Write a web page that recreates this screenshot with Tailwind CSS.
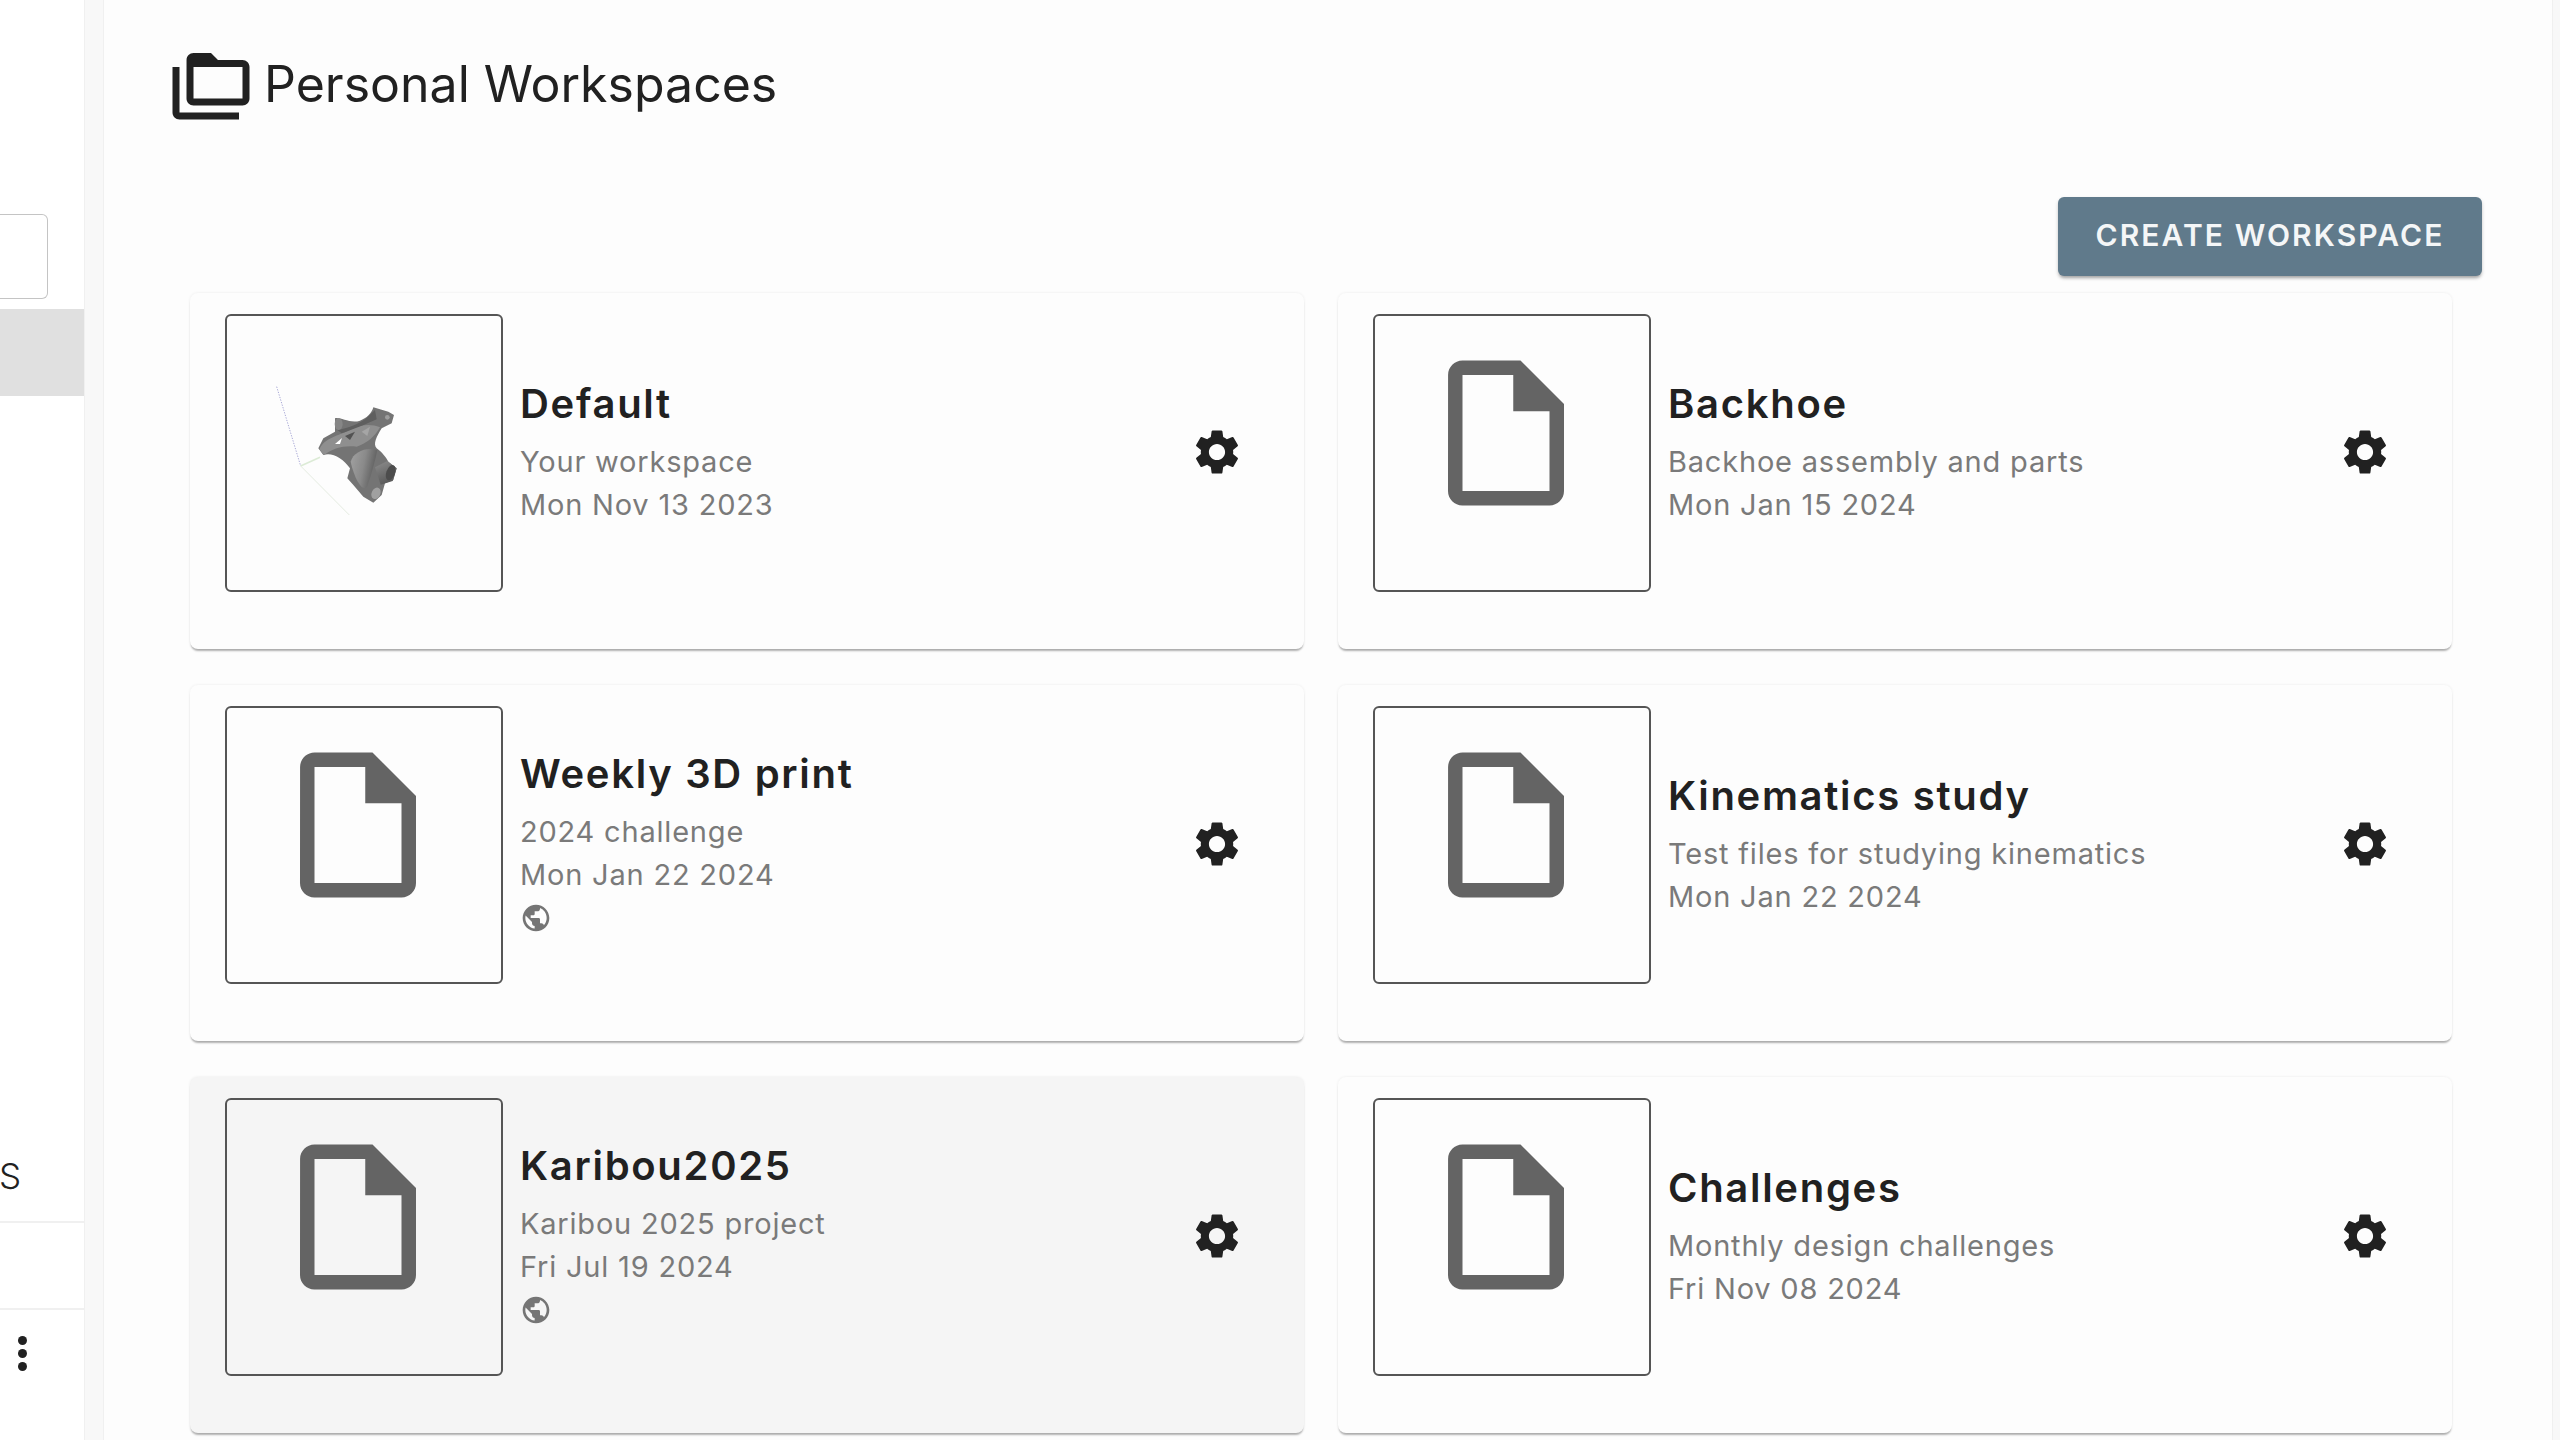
<!DOCTYPE html>
<html lang="en">
<head>
	<meta charset="UTF-8">
	<meta name="viewport" content="width=device-width, initial-scale=1.0">
	<title>Personal Workspaces</title>
	<script src="https://cdn.jsdelivr.net/npm/@tailwindcss/browser@4"></script>
</head>
<body class="bg-[#fdfdfd] font-['Inter',sans-serif] text-[#212121]">

<!-- shared icons -->
<svg class="hidden">
	<symbol id="icon-file" viewBox="0 0 24 24"><path d="M14 2H6c-1.1 0-1.99.9-1.99 2L4 20c0 1.1.89 2 1.99 2H18c1.1 0 2-.9 2-2V8l-6-6zM6 20V4h7v5h5v11H6z"/></symbol>
	<symbol id="icon-gear" viewBox="0 0 24 24"><path d="M19.14 12.94c.04-.3.06-.61.06-.94 0-.32-.02-.64-.07-.94l2.03-1.58c.18-.14.23-.41.12-.61l-1.92-3.32c-.12-.22-.37-.29-.59-.22l-2.39.96c-.5-.38-1.03-.7-1.62-.94l-.36-2.54c-.04-.24-.24-.41-.48-.41h-3.84c-.24 0-.43.17-.47.41l-.36 2.54c-.59.24-1.13.57-1.62.94l-2.39-.96c-.22-.08-.47 0-.59.22L2.74 8.87c-.12.21-.08.47.12.61l2.03 1.58c-.05.3-.09.63-.09.94s.02.64.07.94l-2.03 1.58c-.18.14-.23.41-.12.61l1.92 3.32c.12.22.37.29.59.22l2.39-.96c.5.38 1.03.7 1.62.94l.36 2.54c.05.24.24.41.48.41h3.84c.24 0 .44-.17.47-.41l.36-2.54c.59-.24 1.13-.56 1.62-.94l2.39.96c.22.08.47 0 .59-.22l1.92-3.32c.12-.22.07-.47-.12-.61l-2.01-1.58zM12 15.6c-1.98 0-3.6-1.62-3.6-3.6s1.62-3.6 3.6-3.6 3.6 1.62 3.6 3.6-1.62 3.6-3.6 3.6z"/></symbol>
	<symbol id="icon-globe" viewBox="0 0 24 24"><path d="M12 2C6.48 2 2 6.48 2 12s4.48 10 10 10 10-4.48 10-10S17.52 2 12 2zm-1 17.93c-3.95-.49-7-3.85-7-7.93 0-.62.08-1.21.21-1.79L9 15v1c0 1.1.9 2 2 2v1.93zm6.9-2.54c-.26-.81-1-1.39-1.9-1.39h-1v-3c0-.55-.45-1-1-1H8v-2h2c.55 0 1-.45 1-1V7h2c1.1 0 2-.9 2-2v-.41c2.93 1.19 5 4.06 5 7.41 0 2.08-.8 3.97-2.1 5.39z"/></symbol>
</svg>

<div class="flex w-[2560px] h-[1440px] overflow-hidden">

	<!-- Sidebar, scrolled mostly out of view -->
	<aside class="w-[84px] shrink-0 bg-white overflow-hidden flex flex-col">
		<div class="h-[85px] w-[48px] mt-[214px] border border-l-0 border-[#c4c4c4] rounded-r-[6px]"></div>
		<div class="h-[87px] mt-[10px] bg-[#e0e0e0]"></div>
		<div class="h-[827px] flex justify-start items-end pb-[25px] border-b-2 border-[#f0f0f0]">
			<span class="text-[35px] leading-[40px] font-light w-[21px] overflow-hidden flex justify-end">S</span>
		</div>
		<div class="h-[87px] border-b-2 border-[#f0f0f0]"></div>
		<div class="flex flex-col gap-[4px] ml-[18px] mt-[26px]">
			<span class="w-[9px] h-[9px] rounded-full bg-[#212121]"></span>
			<span class="w-[9px] h-[9px] rounded-full bg-[#212121]"></span>
			<span class="w-[9px] h-[9px] rounded-full bg-[#212121]"></span>
		</div>
	</aside>
	<div class="w-[20px] shrink-0 bg-[#f8f8f8] border-x border-[#f0f0f0]"></div>

	<!-- Main column -->
	<main class="w-[2448px] shrink-0">
		<header class="flex items-center h-[84px] mt-[46px] ml-[65px]">
			<svg class="w-[84px] h-[84px] fill-[#212121]" viewBox="0 0 24 24"><path fill-rule="evenodd" d="M3 19h17v2H3c-1.1 0-2-.9-2-2V6h2v13zM23 6v9c0 1.1-.9 2-2 2H7c-1.1 0-2-.9-2-2l.01-11c0-1.1.89-2 1.99-2h5l2 2h7c1.1 0 2 .9 2 2zM7 15h14V6H7v9z"/></svg>
			<h1 class="ml-[11px] -mt-[8px] text-[50px] leading-[60px] font-normal">Personal Workspaces</h1>
		</header>

		<div class="flex justify-end mt-[67px] mr-[70px]">
			<button class="w-[424px] h-[79px] pb-[2px] rounded-[6px] bg-[#607a8b] text-[#f4f6f7] text-[30px] font-semibold tracking-[2.1px] shadow-[0_3px_3px_-1px_rgba(0,0,0,0.25),0_2px_4px_0_rgba(0,0,0,0.14)]">CREATE WORKSPACE</button>
		</div>

		<section class="grid grid-cols-[1114px_1114px] gap-x-[34px] gap-y-[36px] mt-[17px] ml-[86px]">

			<!-- Default -->
			<article class="h-[356px] rounded-[8px] bg-[#fdfdfd] pl-[35px] pt-[21px] flex shadow-[0_3px_2px_-1px_rgba(0,0,0,0.3),0_0_3px_0_rgba(0,0,0,0.08)]">
				<div class="w-[278px] h-[278px] shrink-0 rounded-[6px] border-2 border-[#555] overflow-hidden">
					<!-- part render -->
					<svg class="w-[160px] h-[160px] ml-[33px] mt-[64px] blur-[0.6px]" viewBox="0 0 480 480">
						<defs>
							<linearGradient id="bodyShade" x1="0" y1="0" x2="1" y2="0.3"><stop offset="0" stop-color="#a2a2a2"/><stop offset="0.55" stop-color="#8a8a8a"/><stop offset="1" stop-color="#5e5e5e"/></linearGradient>
							<linearGradient id="shaftShade" x1="0" y1="0" x2="0.4" y2="1"><stop offset="0" stop-color="#8e8e8e"/><stop offset="1" stop-color="#5a5a5a"/></linearGradient>
						</defs>
						<path d="M50 20 L122 258" stroke="#a9a9d6" stroke-width="3" stroke-dasharray="4 4" fill="none"/>
						<path d="M122 258 L180 232" stroke="#dcebd6" stroke-width="5" fill="none"/>
						<path d="M122 258 L268 405" stroke="#e4ebe0" stroke-width="3" fill="none"/>
						<!-- silhouette -->
						<path fill="#747474" d="M225 115 C240 110 270 132 300 122 C320 115 335 100 340 82 L385 95 L402 105 L395 130 L365 145 C350 170 338 192 350 205 C365 215 380 235 385 245 L410 265 L400 300 L375 310 L365 345 L340 368 L310 350 L280 315 L262 295 L270 265 C250 235 215 215 190 225 L175 205 L190 175 L225 155 Z"/>
						<!-- arch band -->
						<path fill="#8f8f8f" d="M178 208 C195 172 235 168 270 150 C300 135 330 130 360 142 C345 170 320 190 290 200 C255 195 215 205 192 226 Z"/>
						<path fill="#5f5f5f" d="M232 150 C262 145 300 132 322 112 L345 90 L350 118 C320 132 280 148 245 160 Z"/>
						<!-- hub and shaft -->
						<path fill="url(#bodyShade)" d="M272 245 C280 215 320 200 352 210 C345 245 335 280 322 318 C312 340 285 305 272 245 Z"/>
						<path fill="url(#shaftShade)" d="M345 262 L382 243 L410 265 L398 303 L362 314 Z"/>
						<ellipse cx="392" cy="278" rx="13" ry="24" fill="#4c4c4c" transform="rotate(20 392 278)"/>
						<ellipse cx="348" cy="340" rx="13" ry="18" fill="#a0a0a0" transform="rotate(25 348 340)"/>
						<!-- holes and lugs -->
						<path fill="#fff" d="M225 192 L246 174 L240 192 Z"/>
						<path fill="#525252" d="M255 168 L285 155 L270 180 Z"/>
						<path fill="#a5a5a5" d="M305 155 L330 140 L322 168 Z"/>
						<circle cx="382" cy="112" r="7" fill="#9e9e9e"/>
						<ellipse cx="236" cy="132" rx="12" ry="18" fill="#868686"/>
					</svg>
				</div>
				<div class="flex flex-col justify-center h-[278px] w-[640px] ml-[17px] pb-[6px]">
					<h2 class="text-[40px] leading-[57px] mb-[8px] font-semibold tracking-[1.7px]">Default</h2>
					<p class="text-[29px] leading-[43px] tracking-[0.8px] text-[#7a7a7a]">Your workspace</p>
					<p class="text-[29px] leading-[43px] tracking-[0.8px] text-[#7a7a7a]">Mon Nov 13 2023</p>
				</div>
				<svg class="w-[54px] h-[54px] shrink-0 mt-[111px] ml-[30px] fill-[#212121]"><use href="#icon-gear"/></svg>
			</article>

			<!-- Backhoe -->
			<article class="h-[356px] rounded-[8px] bg-[#fdfdfd] pl-[35px] pt-[21px] flex shadow-[0_3px_2px_-1px_rgba(0,0,0,0.3),0_0_3px_0_rgba(0,0,0,0.08)]">
				<div class="w-[278px] h-[278px] shrink-0 rounded-[6px] border-2 border-[#555]">
					<svg class="w-[174px] h-[174px] ml-[44px] mt-[30px] fill-[#646464]"><use href="#icon-file"/></svg>
				</div>
				<div class="flex flex-col justify-center h-[278px] w-[640px] ml-[17px] pb-[6px]">
					<h2 class="text-[40px] leading-[57px] mb-[8px] font-semibold tracking-[1.7px]">Backhoe</h2>
					<p class="text-[29px] leading-[43px] tracking-[0.8px] text-[#7a7a7a]">Backhoe assembly and parts</p>
					<p class="text-[29px] leading-[43px] tracking-[0.8px] text-[#7a7a7a]">Mon Jan 15 2024</p>
				</div>
				<svg class="w-[54px] h-[54px] shrink-0 mt-[111px] ml-[30px] fill-[#212121]"><use href="#icon-gear"/></svg>
			</article>

			<!-- Weekly 3D print -->
			<article class="h-[356px] rounded-[8px] bg-[#fdfdfd] pl-[35px] pt-[21px] flex shadow-[0_3px_2px_-1px_rgba(0,0,0,0.3),0_0_3px_0_rgba(0,0,0,0.08)]">
				<div class="w-[278px] h-[278px] shrink-0 rounded-[6px] border-2 border-[#555]">
					<svg class="w-[174px] h-[174px] ml-[44px] mt-[30px] fill-[#646464]"><use href="#icon-file"/></svg>
				</div>
				<div class="flex flex-col justify-center h-[278px] w-[640px] ml-[17px] pb-[6px]">
					<h2 class="text-[40px] leading-[57px] mb-[8px] font-semibold tracking-[1.7px]">Weekly 3D print</h2>
					<p class="text-[29px] leading-[43px] tracking-[0.8px] text-[#7a7a7a]">2024 challenge</p>
					<p class="text-[29px] leading-[43px] tracking-[0.8px] text-[#7a7a7a]">Mon Jan 22 2024</p>
					<div class="h-[43px] flex items-center"><svg class="w-[32px] h-[32px] fill-[#757575]"><use href="#icon-globe"/></svg></div>
				</div>
				<svg class="w-[54px] h-[54px] shrink-0 mt-[111px] ml-[30px] fill-[#212121]"><use href="#icon-gear"/></svg>
			</article>

			<!-- Kinematics study -->
			<article class="h-[356px] rounded-[8px] bg-[#fdfdfd] pl-[35px] pt-[21px] flex shadow-[0_3px_2px_-1px_rgba(0,0,0,0.3),0_0_3px_0_rgba(0,0,0,0.08)]">
				<div class="w-[278px] h-[278px] shrink-0 rounded-[6px] border-2 border-[#555]">
					<svg class="w-[174px] h-[174px] ml-[44px] mt-[30px] fill-[#646464]"><use href="#icon-file"/></svg>
				</div>
				<div class="flex flex-col justify-center h-[278px] w-[640px] ml-[17px] pb-[6px]">
					<h2 class="text-[40px] leading-[57px] mb-[8px] font-semibold tracking-[1.7px]">Kinematics study</h2>
					<p class="text-[29px] leading-[43px] tracking-[0.8px] text-[#7a7a7a]">Test files for studying kinematics</p>
					<p class="text-[29px] leading-[43px] tracking-[0.8px] text-[#7a7a7a]">Mon Jan 22 2024</p>
				</div>
				<svg class="w-[54px] h-[54px] shrink-0 mt-[111px] ml-[30px] fill-[#212121]"><use href="#icon-gear"/></svg>
			</article>

			<!-- Karibou2025 (hovered) -->
			<article class="h-[356px] rounded-[8px] bg-[#f5f5f5] pl-[35px] pt-[21px] flex shadow-[0_3px_2px_-1px_rgba(0,0,0,0.3),0_0_3px_0_rgba(0,0,0,0.08)]">
				<div class="w-[278px] h-[278px] shrink-0 rounded-[6px] border-2 border-[#555]">
					<svg class="w-[174px] h-[174px] ml-[44px] mt-[30px] fill-[#646464]"><use href="#icon-file"/></svg>
				</div>
				<div class="flex flex-col justify-center h-[278px] w-[640px] ml-[17px] pb-[6px]">
					<h2 class="text-[40px] leading-[57px] mb-[8px] font-semibold tracking-[1.7px]">Karibou2025</h2>
					<p class="text-[29px] leading-[43px] tracking-[0.8px] text-[#7a7a7a]">Karibou 2025 project</p>
					<p class="text-[29px] leading-[43px] tracking-[0.8px] text-[#7a7a7a]">Fri Jul 19 2024</p>
					<div class="h-[43px] flex items-center"><svg class="w-[32px] h-[32px] fill-[#757575]"><use href="#icon-globe"/></svg></div>
				</div>
				<svg class="w-[54px] h-[54px] shrink-0 mt-[111px] ml-[30px] fill-[#212121]"><use href="#icon-gear"/></svg>
			</article>

			<!-- Challenges -->
			<article class="h-[356px] rounded-[8px] bg-[#fdfdfd] pl-[35px] pt-[21px] flex shadow-[0_3px_2px_-1px_rgba(0,0,0,0.3),0_0_3px_0_rgba(0,0,0,0.08)]">
				<div class="w-[278px] h-[278px] shrink-0 rounded-[6px] border-2 border-[#555]">
					<svg class="w-[174px] h-[174px] ml-[44px] mt-[30px] fill-[#646464]"><use href="#icon-file"/></svg>
				</div>
				<div class="flex flex-col justify-center h-[278px] w-[640px] ml-[17px] pb-[6px]">
					<h2 class="text-[40px] leading-[57px] mb-[8px] font-semibold tracking-[1.7px]">Challenges</h2>
					<p class="text-[29px] leading-[43px] tracking-[0.8px] text-[#7a7a7a]">Monthly design challenges</p>
					<p class="text-[29px] leading-[43px] tracking-[0.8px] text-[#7a7a7a]">Fri Nov 08 2024</p>
				</div>
				<svg class="w-[54px] h-[54px] shrink-0 mt-[111px] ml-[30px] fill-[#212121]"><use href="#icon-gear"/></svg>
			</article>

		</section>
	</main>

	<div class="flex-1 bg-[#f8f8f8] border-l border-[#f0f0f0]"></div>
</div>

</body>
</html>
